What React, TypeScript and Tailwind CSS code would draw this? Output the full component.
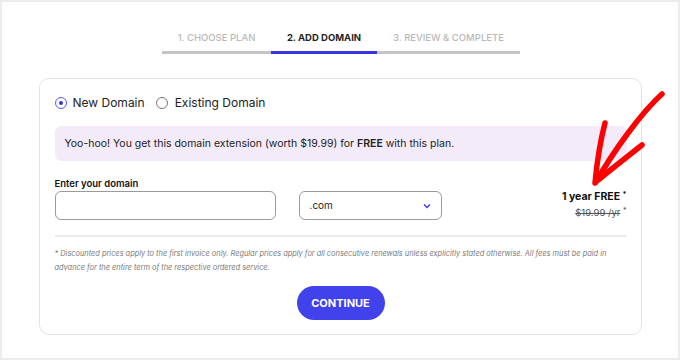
import React from "react";

export default function App() {
  const font = { fontFamily: "Inter, 'Noto Sans', sans-serif" };
  return (
    <div
      className="relative w-[680px] h-[360px] border-2 border-[#ececec] bg-white flex flex-col items-center overflow-hidden"
      style={font}
    >
      {/* Stepper */}
      <div className="flex mt-[29px] ml-[2px]">
        <div className="w-[109px] flex justify-center pb-[6px] border-b-[3px] border-[#c4c4c4] text-[9.5px] leading-[14px] font-medium text-[#b9b9b9]">
          1. CHOOSE PLAN
        </div>
        <div className="w-[106px] flex justify-center pb-[6px] border-b-[3px] border-[#3535e6] text-[9.5px] leading-[14px] font-bold text-[#1f1f1f]">
          2. ADD DOMAIN
        </div>
        <div className="w-[143px] flex justify-center pb-[6px] border-b-[3px] border-[#c4c4c4] text-[9.5px] leading-[14px] font-medium text-[#b9b9b9]">
          3. REVIEW &amp; COMPLETE
        </div>
      </div>

      {/* Card */}
      <div className="mt-[24px] w-[603px] h-[257px] rounded-[10px] border border-[#e3e3e3] pl-[15px] pr-[14px] pt-[15px] flex flex-col">
        <div className="flex items-center h-[18px] text-[12px] text-[#222]">
          <span className="w-[12px] h-[12px] rounded-full border border-[#5b5bea] flex items-center justify-center mr-[6px]">
            <span className="w-[4px] h-[4px] rounded-full bg-[#3535e6]" />
          </span>
          <span>New Domain</span>
          <span className="w-[12px] h-[12px] rounded-full border border-[#777] ml-[11px] mr-[7px]" />
          <span>Existing Domain</span>
        </div>

        <div className="mt-[14px] h-[35px] rounded-[6px] bg-[#f3ebfa] flex items-center pl-[10px] text-[10.5px] text-[#222]">
          <span>
            Yoo-hoo! You get this domain extension (worth $19.99) for <b className="font-semibold">FREE</b> with this plan.
          </span>
        </div>

        <div className="mt-[17px] flex">
          <div className="flex flex-col">
            <div className="text-[9.5px] font-semibold text-[#111] leading-[12px]">Enter your domain</div>
            <div className="mt-[1px] flex">
              <div className="w-[221px] h-[29px] rounded-[6px] border-[1.5px] border-[#9a9a9a]" />
              <div className="ml-[23px] w-[143px] h-[29px] rounded-[6px] border-[1.5px] border-[#9a9a9a] flex items-center justify-between pl-[10px] pr-[10px] text-[10px] text-[#222]">
                <span>.com</span>
                <svg width="8" height="6" viewBox="0 0 8 6">
                  <path d="M1 1.5 L4 4.5 L7 1.5" fill="none" stroke="#3535e6" strokeWidth="1.3" />
                </svg>
              </div>
            </div>
          </div>
          <div className="ml-auto flex flex-col items-end pt-[12px]">
            <div className="text-[10.5px] font-bold text-[#111] leading-[14px]">
              1 year FREE <sup className="text-[7px]">*</sup>
            </div>
            <div className="mt-[2px] text-[9.5px] text-[#555] leading-[14px]">
              <span className="line-through">$19.99 /yr</span> <sup className="text-[7px]">*</sup>
            </div>
          </div>
        </div>

        <div className="mt-[15px] h-[2px] bg-[#ececec]" />

        <div className="mt-[10px] text-[7.4px] italic text-[#7a7a7a] leading-[14px]">
          * Discounted prices apply to the first invoice only. Regular prices apply for all consecutive renewals unless explicitly stated otherwise. All fees must be paid in advance for the entire term of the respective ordered service.
        </div>

        <div className="mt-[11px] flex justify-center">
          <div className="w-[88px] h-[34px] rounded-full bg-[#4242ec] flex items-center justify-center text-white text-[11px] font-bold">
            CONTINUE
          </div>
        </div>
      </div>

      {/* Red arrow annotation */}
      <svg className="absolute left-0 top-0" width="680" height="360" viewBox="0 0 680 360">
        <g fill="none" stroke="#f00" strokeLinecap="round" strokeLinejoin="round">
          <path d="M660 92 C 640 110, 612 148, 594 180" strokeWidth="5.5" />
          <path d="M603 121 C 598 140, 595 160, 593 181" strokeWidth="5.5" />
          <path d="M640 143 C 625 155, 608 168, 595 179" strokeWidth="5.5" />
        </g>
      </svg>
    </div>
  );
}
